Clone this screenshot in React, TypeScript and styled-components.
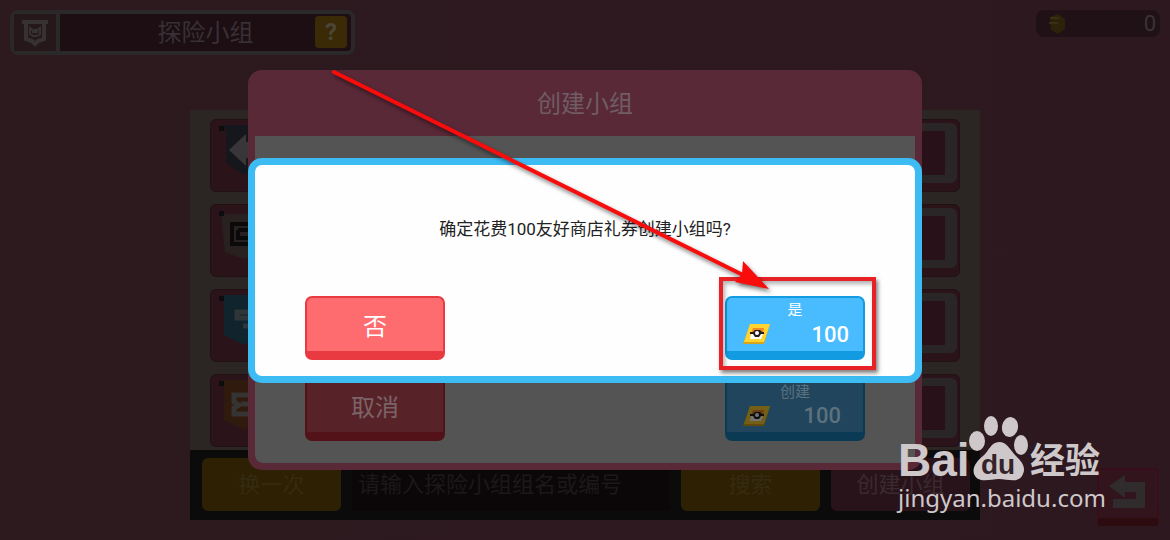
import React from 'react';
import styled, { createGlobalStyle } from 'styled-components';

const GlobalStyle = createGlobalStyle`
  *, *::before, *::after { box-sizing: border-box; }
  body { margin: 0; background: #2c191f; }
  button, input { font: inherit; margin: 0; }
  h1, h2, p { margin: 0; font-weight: 400; }
`;

const Screen = styled.div`
  position: relative;
  display: flex;
  flex-direction: column;
  min-height: 100vh;
  overflow: hidden;
  background: linear-gradient(90deg, #2c1a1f, #2d181f);
  color: #383034;
  font-family: Roboto, 'Noto Sans CJK SC', sans-serif;
`;

const TopBar = styled.header`
  display: flex;
  align-items: flex-start;
  justify-content: space-between;
  height: 110px;
  padding: 10px;
`;

const TitleBox = styled.div`
  display: flex;
  width: 345px;
  height: 45px;
  border: 4px solid #2a2829;
  border-radius: 8px;
  background: #1c0e13;
`;

const Badge = styled.div`
  display: flex;
  align-items: center;
  justify-content: center;
  width: 46px;
  border-right: 4px solid #2a2829;
  background: #26171b;
`;

const Title = styled.h1`
  flex: 1;
  padding-left: 36px;
  font-size: 24px;
  line-height: 38px;
  text-align: center;
`;

const HelpButton = styled.button`
  width: 32px;
  height: 32px;
  margin: 2px 4px 0 0;
  padding: 0;
  border: 0;
  border-radius: 4px;
  background: #3a2a06;
  color: #4b4638;
  font-size: 24px;
  font-weight: 700;
  line-height: 32px;
`;

const Counter = styled.div`
  display: flex;
  align-items: center;
  justify-content: space-between;
  width: 124px;
  height: 27px;
  padding: 0 4px 0 12px;
  border-radius: 8px;
  background: #1f1116;
  color: #3a3235;
  font-size: 22px;
`;

const Main = styled.main`
  display: grid;
  grid-template-columns: 190px minmax(0, 1fr) 190px;
  flex: 1;
  padding-bottom: 20px;
`;

const Side = styled.aside`
  display: flex;
  align-items: flex-end;
  justify-content: flex-end;
  grid-column: 3;
`;

const Panel = styled.section`
  display: flex;
  flex-direction: column;
  grid-column: 2;
  grid-row: 1;
`;

const GroupList = styled.div`
  display: flex;
  flex: 1;
  flex-direction: column;
  gap: 12px;
  padding: 9px 20px 3px;
  background: #2b2624;
`;

const GroupRow = styled.div`
  display: flex;
  align-items: flex-start;
  justify-content: space-between;
  height: 73px;
  padding: 3px 2px 8px 8px;
  border: 1px solid #211016;
  border-radius: 6px;
  background: #2b131a;
`;

const JoinButton = styled.button`
  width: 72px;
  height: 60px;
  border: 8px solid #2a2526;
  border-right-width: 12px;
  border-radius: 6px;
  background: #281118;
`;

const Toolbar = styled.form`
  display: flex;
  gap: 11px;
  height: 70px;
  padding: 8px 10px 9px 12px;
  background: #0c0b0c;
`;

const ToolButton = styled.button<{ $face: string; $ink: string }>`
  width: 139px;
  padding: 0 0 6px;
  border: 0;
  border-radius: 6px;
  background: ${(p) => p.$face};
  color: ${(p) => p.$ink};
  font-size: 22px;
`;

const SearchInput = styled.input`
  flex: 1;
  min-width: 0;
  padding: 2px 6px;
  border: 0;
  background: #0b0709;
  color: #1b181a;
  font-size: 22px;
  &::placeholder { color: #1b181a; opacity: 1; }
`;

const BackButton = styled.button`
  width: 62px;
  height: 58px;
  margin: 0 11px -6px 0;
  padding: 0;
  border: 2px solid #3a0d1c;
  border-bottom: 8px solid #2d0c10;
  border-radius: 4px;
  background: #32141c;
`;

const Overlay = styled.div`
  position: absolute;
  inset: 0;
  display: flex;
  align-items: center;
  padding: 0 248px;
`;

const CreateDialog = styled.section`
  display: flex;
  flex: 1;
  flex-direction: column;
  min-height: 400px;
  border: 7px solid #5a2937;
  border-top: 0;
  border-radius: 14px;
  background: #5a2937;
  overflow: hidden;
`;

const DialogTitle = styled.h2`
  height: 66px;
  color: #6f5c64;
  font-size: 24px;
  line-height: 68px;
  text-align: center;
`;

const CreateBody = styled.div`
  display: flex;
  flex: 1;
  flex-direction: column;
  justify-content: flex-end;
  padding: 0 50px 22px;
  border-radius: 0 0 8px 8px;
  background: #555455;
`;

const ConfirmDialog = styled.section`
  display: flex;
  flex: 1;
  flex-direction: column;
  justify-content: space-between;
  min-height: 225px;
  padding: 48px 50px 16px;
  border: 7px solid #3dbcf4;
  border-radius: 14px;
  background: #fefefe;
`;

const Message = styled.p`
  color: #222;
  font-size: 17px;
  line-height: 32px;
  text-align: center;
`;

const Actions = styled.div`
  display: flex;
  justify-content: space-between;
`;

const ActionButton = styled.button<{ $face: string; $edge: string; $ink: string }>`
  display: flex;
  flex-direction: column;
  align-items: center;
  justify-content: center;
  width: 140px;
  height: 64px;
  padding: 0 14px;
  border: 2px solid ${(p) => p.$edge};
  border-bottom-width: 9px;
  border-radius: 7px;
  background: ${(p) => p.$face};
  color: ${(p) => p.$ink};
  font-size: 24px;
`;

const SmallLabel = styled.span`
  font-size: 15px;
  line-height: 20px;
`;

const Price = styled.span<{ $inset: number }>`
  display: flex;
  align-items: center;
  justify-content: space-between;
  width: 100%;
  height: 28px;
  padding: 0 ${(p) => p.$inset}px 0 2px;
  font-size: 22px;
  font-weight: 500;
`;

const Target = styled.div`
  position: relative;
`;

const Highlight = styled.div`
  position: absolute;
  inset: -19px -11px -10px -6px;
  border: 4px solid #e82127;
  box-shadow: 2px 3px 4px rgba(0, 0, 0, 0.5), inset 2px 3px 4px rgba(0, 0, 0, 0.3);
  pointer-events: none;
`;

const Arrow = styled.svg`
  position: absolute;
  right: 96px;
  bottom: 70px;
  overflow: visible;
  pointer-events: none;
  filter: drop-shadow(2px 3px 2px rgba(0, 0, 0, 0.5));
`;

const Watermark = styled.a`
  position: absolute;
  right: 64px;
  bottom: 26px;
  display: flex;
  flex-direction: column;
  width: 208px;
  color: #cfc8cb;
  text-decoration: none;
`;

const Brand = styled.span`
  display: flex;
  align-items: flex-end;
  height: 68px;
  font-family: 'Liberation Sans', 'Noto Sans CJK SC', sans-serif;
  font-weight: 700;
`;

const BrandLatin = styled.span`
  width: 70px;
  font-size: 46px;
  line-height: 44px;
`;

const BrandChinese = styled.span`
  padding-left: 2px;
  font-size: 35px;
  line-height: 42px;
`;

const Domain = styled.span`
  font-family: 'Noto Sans', sans-serif;
  font-size: 24px;
  line-height: 32px;
`;

const TicketArt = styled.svg<{ $dim: boolean }>`
  filter: ${(p) => (p.$dim ? 'brightness(0.45)' : 'none')};
`;

const Ticket = ({ dim = false }: { dim?: boolean }) => (
  <TicketArt $dim={dim} width="28" height="22" viewBox="0 0 28 22" aria-hidden="true">
    <path d="M7 1h20l-6 20H0z" fill="#d6a51c" />
    <path d="M7 1h20l-6 18H1z" fill="#ffd42e" />
    <path d="M10 5h11l-1 6H8z" fill="#ef8a25" />
    <path d="M8 11h12l-2 5H7z" fill="#fff" />
    <path d="M7 9h3l2-2h5l2 2h2v2h-3l-2 3h-4l-2-3H7z" fill="#241c1c" />
    <circle cx="14" cy="10" r="2" fill="#fff" />
  </TicketArt>
);

const Shield = () => (
  <svg width="28" height="28" viewBox="0 0 28 28" fill="none" stroke="#363234" aria-hidden="true">
    <path d="M1 3h26M5 4v16l6 2 3 3 3-3 6-2V4" strokeWidth="4" />
    <path d="M9 9l3 2h4l3-2v6l-3 2h-4l-3-2zM11 13h6" strokeWidth="2" />
  </svg>
);

const emblems = [
  <path key="a" d="M3 2h38v40l-16 10L7 40V8z" fill="#16171c" />,
  <path key="b" d="M2 6h38v40l-16 5L6 44z" fill="#29211f" />,
  <path key="c" d="M5 2h35v40l-15 10L5 42z" fill="#10242e" />,
  <path key="d" d="M5 2h35v40l-15 10L5 42z" fill="#301a0d" />,
];

const marks = [
  <path key="a" d="M10 27 27 11v8h6v16h-6v8z" fill="#383638" />,
  <path key="b" d="M13 16h24v20H13zM19 22h18M19 22v8h18" fill="none" stroke="#0b090a" strokeWidth="4" />,
  <path key="c" d="M32 19H18v6h14M24 33h10" fill="none" stroke="#303538" strokeWidth="5" />,
  <path key="d" d="M35 17H15v7l5 3-5 3v6h20M22 26h12" fill="none" stroke="#363333" strokeWidth="5" />,
];

const ConfirmArrow = () => (
  <Arrow width="438" height="220" viewBox="0 0 438 220" aria-hidden="true">
    <path d="M3 2 412 205" stroke="#f80c0c" strokeWidth="4" strokeLinecap="round" />
    <path d="m438 219-34-7 7-8 1-13z" fill="#f80c0c" />
  </Arrow>
);

export default function App() {
  return (
    <Screen>
      <GlobalStyle />
      <TopBar>
        <TitleBox>
          <Badge><Shield /></Badge>
          <Title>探险小组</Title>
          <HelpButton type="button">?</HelpButton>
        </TitleBox>
        <Counter>
          <svg width="18" height="20" viewBox="0 0 18 20" aria-hidden="true">
            <path d="M2 3 10 0l7 5v10l-7 5-7-4z" fill="#2c220a" />
            <path d="M2 4h9M1 9h9" stroke="#383016" strokeWidth="2" />
          </svg>
          <span>0</span>
        </Counter>
      </TopBar>
      <Main>
        <Panel>
          <GroupList>
            {emblems.map((shape, i) => (
              <GroupRow key={i}>
                <svg width="46" height="56" viewBox="0 0 46 56" aria-hidden="true">
                  {shape}
                  {marks[i]}
                  <path d="M0 3h5v5H0z" fill="#0c0b0f" />
                </svg>
                <JoinButton type="button" aria-label="加入" />
              </GroupRow>
            ))}
          </GroupList>
          <Toolbar>
            <ToolButton type="button" $face="#2d2003" $ink="#352b12">换一次</ToolButton>
            <SearchInput aria-label="小组" placeholder="请输入探险小组组名或编号" />
            <ToolButton type="button" $face="#2d2003" $ink="#352b12">搜索</ToolButton>
            <ToolButton type="button" $face="#28131b" $ink="#3a2a30">创建小组</ToolButton>
          </Toolbar>
        </Panel>
        <Side>
          <BackButton type="button" aria-label="返回">
            <svg width="40" height="36" viewBox="0 0 40 36" aria-hidden="true">
              <path d="M1 12 17 1v7h20v26H5v-9h23v-7H17v6z" fill="#302b2d" />
            </svg>
          </BackButton>
        </Side>
      </Main>

      <Overlay>
        <CreateDialog aria-label="创建小组">
          <DialogTitle>创建小组</DialogTitle>
          <CreateBody>
            <Actions>
              <ActionButton type="button" $face="#582328" $edge="#521217" $ink="#7b6468">取消</ActionButton>
              <ActionButton type="button" $face="#20455c" $edge="#0b3a54" $ink="#5d717e">
                <SmallLabel>创建</SmallLabel>
                <Price $inset={8}><Ticket dim />100</Price>
              </ActionButton>
            </Actions>
          </CreateBody>
        </CreateDialog>
      </Overlay>

      <Overlay>
        <ConfirmDialog role="dialog" aria-label="确定">
          <Message>确定花费100友好商店礼券创建小组吗?</Message>
          <Actions>
            <ActionButton type="button" $face="#ff6c70" $edge="#e93a42" $ink="#fff">否</ActionButton>
            <Target>
              <ActionButton type="button" $face="#48bcff" $edge="#129be0" $ink="#fff">
                <SmallLabel>是</SmallLabel>
                <Price $inset={0}><Ticket />100</Price>
              </ActionButton>
              <Highlight />
              <ConfirmArrow />
            </Target>
          </Actions>
        </ConfirmDialog>
      </Overlay>

      <Watermark href="#jingyan">
        <Brand>
          <BrandLatin>Bai</BrandLatin>
          <svg width="60" height="66" viewBox="0 0 60 66" aria-label="du">
            <g fill="#cfc8cb">
              <ellipse cx="9" cy="25" rx="8" ry="10" />
              <ellipse cx="23" cy="10" rx="7" ry="10" />
              <ellipse cx="42" cy="11" rx="8" ry="10" transform="rotate(10 42 11)" />
              <ellipse cx="53" cy="29" rx="7" ry="10" />
              <path d="M31 26c8 0 11 8 17 14s10 11 7 18c-4 10-15 5-24 5S10 68 6 58c-2-7 3-13 9-18s8-14 16-14Z" />
            </g>
            <text x="13" y="58" fill="#342329" fontFamily="Liberation Sans, sans-serif" fontWeight="700" fontSize="28">du</text>
          </svg>
          <BrandChinese>经验</BrandChinese>
        </Brand>
        <Domain>jingyan.baidu.com</Domain>
      </Watermark>
    </Screen>
  );
}
